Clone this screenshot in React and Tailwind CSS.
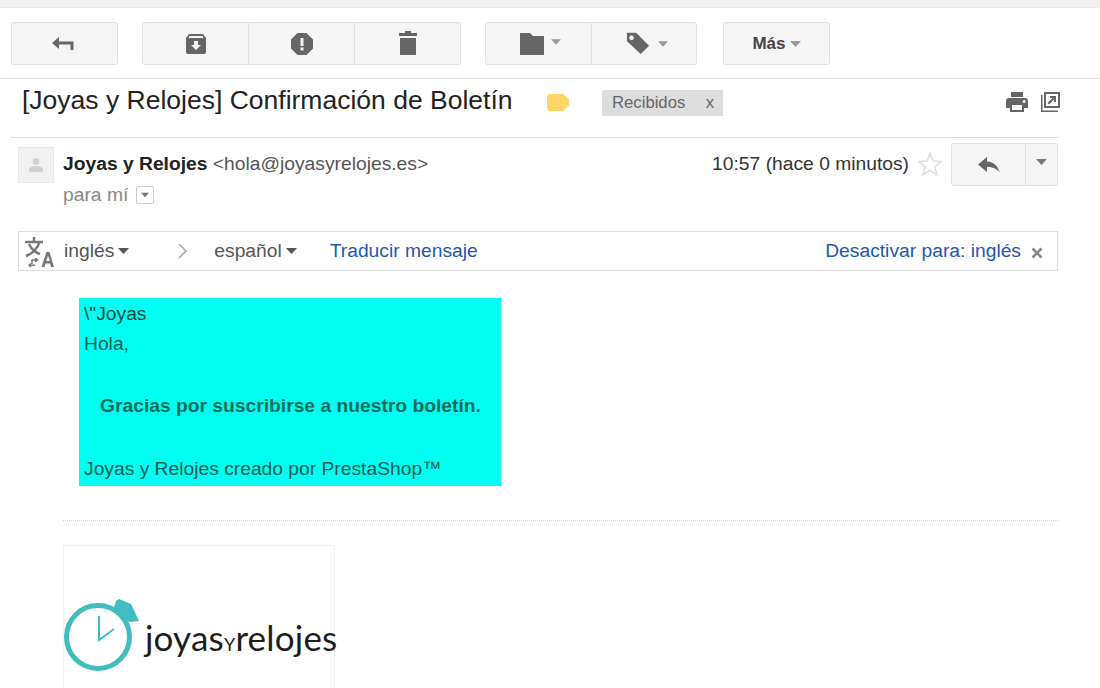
import React from 'react'

const Caret = ({ className = '' }) => (
  <svg width="11" height="6" viewBox="0 0 11 6" className={className}>
    <path d="M0 0h11L5.500 6z" fill="currentColor" />
  </svg>
)

const ToolButton = ({ className = '', children }) => (
  <div className={`h-full flex items-center justify-center text-[#666] ${className}`}>{children}</div>
)

function Toolbar() {
  const box = 'h-[43px] flex rounded-[3px] border border-[#e0e0e0] bg-[#f5f5f5]'
  return (
    <div className="h-[71px] pl-[11px] pt-[14px] border-b border-[#e5e5e5] flex">
      <div className={`${box} w-[107px]`}>
        <ToolButton className="w-full pr-[6px]">
          <svg width="24" height="16" viewBox="0 0 24 16" fill="none">
            <path d="M9 1L2 7l7 6V9.500V4.500z" fill="currentColor" />
            <path d="M8 7h14v7" stroke="currentColor" strokeWidth="3" fill="none" />
          </svg>
        </ToolButton>
      </div>
      <div className={`${box} w-[319px] ml-[24px] divide-x divide-[#e0e0e0]`}>
        <ToolButton className="w-[106px]">
          <svg width="22" height="20" viewBox="0 0 22 20">
            <path fillRule="evenodd" fill="currentColor" d="M4 0h14l3 4v14a2 2 0 0 1-2 2H3a2 2 0 0 1-2-2V4zM4.500 2L3.500 4h15l-1-2zM9 7v4H6l5 5 5-5h-3V7z" />
          </svg>
        </ToolButton>
        <ToolButton className="w-[106px]">
          <svg width="22" height="22" viewBox="0 0 22 22">
            <path fillRule="evenodd" fill="currentColor" d="M6.500 0h9L22 6.500v9L15.500 22h-9L0 15.500v-9zM9.500 5v8h3V5zM9.500 14.500v3h3v-3z" />
          </svg>
        </ToolButton>
        <ToolButton className="flex-1">
          <svg width="20" height="24" viewBox="0 0 20 24" className="-mt-[2px]">
            <path fill="currentColor" d="M7 0h6v2h6v3H1V2h6zM2 7h16v17H2z" />
          </svg>
        </ToolButton>
      </div>
      <div className={`${box} w-[212px] ml-[24px] divide-x divide-[#e0e0e0]`}>
        <ToolButton className="w-[106px] gap-[6px] pl-[2px]">
          <svg width="26" height="22" viewBox="0 0 26 22">
            <path fill="currentColor" d="M1 0h10l3 3h11v19H1z" />
          </svg>
          <Caret className="text-[#999] w-[10px] -mt-[3px]" />
        </ToolButton>
        <ToolButton className="flex-1 gap-[8px] pl-[6px]">
          <svg width="24" height="24" viewBox="0 0 26 26" className="-mt-[2px]">
            <path fillRule="evenodd" fill="currentColor" d="M1 2h10l14 14-9 9L1 11zM6 5a2.500 2.500 0 1 0 .01 0z" />
          </svg>
          <Caret className="text-[#999] w-[10px]" />
        </ToolButton>
      </div>
      <div className={`${box} w-[107px] ml-[26px]`}>
        <ToolButton className="w-full gap-[4px]">
          <span className="text-[17px] font-bold text-[#444]">Más</span>
          <Caret className="text-[#999]" />
        </ToolButton>
      </div>
    </div>
  )
}

function SubjectRow() {
  return (
    <div className="h-[59px] ml-[11px] mr-[42px] border-b border-[#e0e0e0] flex items-start">
      <h1 className="ml-[11px] mt-[3px] text-[26.500px] leading-[36px] text-[#222] whitespace-nowrap w-[514px]">
        [Joyas y Relojes] Confirmación de Boletín
      </h1>
      <svg width="22" height="17" viewBox="0 0 22 17" className="mt-[15px] ml-[11px]">
        <path fill="#fdd663" d="M3 0h13l6 5v7l-6 5H3a3 3 0 0 1-3-3V3a3 3 0 0 1 3-3z" />
      </svg>
      <div className="ml-[33px] mt-[11px] w-[121px] h-[26px] bg-[#dddddd] flex items-center justify-between pl-[10px] pr-[9px] text-[16.700px] text-[#666]">
        <span>Recibidos</span>
        <span>x</span>
      </div>
      <div className="ml-auto mt-[13px] flex items-center gap-[13px] text-[#666]">
        <svg width="22" height="20" viewBox="0 0 22 20">
          <path fillRule="evenodd" fill="currentColor" d="M5 0h12v5H5zM3 6h16a3 3 0 0 1 3 3v7h-4v4H4v-4H0V9a3 3 0 0 1 3-3zM6 13v5h10v-5zM18 8a1.500 1.500 0 1 0 .01 0z" />
        </svg>
        <svg width="19" height="20" viewBox="0 0 19 20" className="-mr-[2px]">
          <path fillRule="evenodd" fill="currentColor" d="M3 0h16v16H3zM5 2v12h12V2zM0 3h1.500v15.500H17V20H0z" />
          <path fill="currentColor" d="M9 4h6v6h-2V7.500l-5 5L6.500 11l5-5H9z" />
        </svg>
      </div>
    </div>
  )
}

function SenderRow() {
  return (
    <div className="h-[93px] ml-[18px] mr-[42px] flex items-start">
      <div className="mt-[9px] w-[36px] h-[36px] bg-[#f1f1f1] border border-[#e6e6e6] flex items-center justify-center">
        <svg width="14" height="14" viewBox="0 0 14 14">
          <circle cx="7" cy="3.500" r="3.200" fill="#d0d0d0" />
          <path d="M0 14v-2.500C0 9.500 3 8 7 8s7 1.500 7 3.500V14z" fill="#d0d0d0" />
        </svg>
      </div>
      <div className="ml-[9px] mt-[13px]">
        <div className="text-[19.250px] leading-[26px] text-[#555] whitespace-nowrap">
          <span className="font-bold text-[#222]">Joyas y Relojes</span> &lt;hola@joyasyrelojes.es&gt;
        </div>
        <div className="mt-[5px] flex items-center gap-[8px] text-[19.250px] leading-[26px] text-[#888]">
          <span>para mí</span>
          <span className="w-[18px] h-[18px] border border-[#ccc] rounded-[2px] flex items-center justify-center text-[#777]">
            <Caret className="w-[8px]" />
          </span>
        </div>
      </div>
      <div className="ml-auto flex items-start">
        <span className="mt-[13px] text-[19.250px] leading-[26px] text-[#333] whitespace-nowrap">10:57 (hace 0 minutos)</span>
        <svg width="24" height="24" viewBox="0 0 24 24" className="mt-[14px] ml-[9px]">
          <path d="M12 1.500l3 7.500 8 .6-6.100 5.200 1.900 7.800L12 18.400l-6.800 4.200 1.900-7.800L1 9.600 9 9z" fill="none" stroke="#dedede" strokeWidth="1.500" />
        </svg>
        <div className="mt-[5px] ml-[9px] w-[107px] h-[43px] flex rounded-[3px] border border-[#e0e0e0] bg-[#f5f5f5] divide-x divide-[#e0e0e0] text-[#666]">
          <div className="w-[74px] flex items-center justify-center">
            <svg width="22" height="18" viewBox="0 0 22 18">
              <path fill="currentColor" d="M9 1v4.500c7 .5 11 4.500 12.500 11-3-4-6.500-5.500-12.500-5.500V16L0 8.500z" />
            </svg>
          </div>
          <div className="flex-1 flex items-center justify-center pb-[5px]">
            <Caret className="text-[#777]" />
          </div>
        </div>
      </div>
    </div>
  )
}

function TranslateBar() {
  return (
    <div className="h-[40px] ml-[18px] mr-[42px] border border-[#dddddd] flex items-center text-[19.250px] whitespace-nowrap">
      <svg width="30" height="34" viewBox="0 0 30 34" className="ml-[5px] mt-[2px] text-[#777]">
        <path fill="none" stroke="currentColor" strokeWidth="2.400" d="M1 7h18M10 2v5M15.500 7C14 13 8 19 2 21M5 9c2 5 7 9 11 10" />
        <path fill="currentColor" d="M22.500 17h3L30 32h-3l-1-3.500h-4.500L20.500 32h-3zM24 20.500l-1.700 5.500h3.400z" />
        <path fill="none" stroke="currentColor" strokeWidth="1.400" d="M8 29v-4h5M11 23l2.500 2-2.500 2M7 32l-2-1.800L7 28.500M5.500 30.200H11" />
      </svg>
      <span className="ml-[10px] text-[#555]">inglés</span>
      <Caret className="ml-[4px] text-[#555]" />
      <svg width="10" height="16" viewBox="0 0 10 16" className="ml-[49px] text-[#aaa]">
        <path d="M1 1l7 7-7 7" fill="none" stroke="currentColor" strokeWidth="1.700" />
      </svg>
      <span className="ml-[26px] text-[#555]">español</span>
      <Caret className="ml-[4px] text-[#555]" />
      <a className="ml-[33px] text-[#1f56b0]">Traducir mensaje</a>
      <a className="ml-auto text-[#1f56b0]">Desactivar para: inglés</a>
      <svg width="12" height="12" viewBox="0 0 12 12" className="ml-[10px] mr-[14px] mt-[3px]">
        <path d="M1.500 1.500l9 9M10.500 1.500l-9 9" stroke="#888" strokeWidth="2.600" />
      </svg>
    </div>
  )
}

function MessageBody() {
  return (
    <div className="mt-[27px] ml-[79px] w-[422px] h-[188px] bg-[#00fff0] pl-[5px] pt-[1px] text-[19.250px] text-[#0c5f55] whitespace-nowrap">
      <p className="leading-[30px] text-[#164a44]">\"Joyas</p>
      <p className="leading-[30px]">Hola,</p>
      <p className="mt-[32px] leading-[30px] pl-[16px] font-bold text-[#0a6d5d]">Gracias por suscribirse a nuestro boletín.</p>
      <p className="mt-[33px] leading-[30px]">Joyas y Relojes creado por PrestaShop™</p>
    </div>
  )
}

function Logo() {
  return (
    <div className="mt-[24px] ml-[63px] w-[272px] h-[143px] border border-b-0 border-[#f0f0f0] flex items-start">
      <svg width="76" height="72" viewBox="0 0 76 72" className="mt-[53px] shrink-0 -ml-[1px]">
        <circle cx="35" cy="38" r="31.500" fill="none" stroke="#41bcbf" strokeWidth="5" />
        <path d="M53 2l3-2 12 5 8 17-10 1-15-15z" fill="#41bcbf" />
        <path d="M36 17v24l15-11" fill="none" stroke="#41bcbf" strokeWidth="2" />
      </svg>
      <div className="mt-[71px] ml-[6px] text-[35px] leading-[40px] tracking-[0.2px] font-['Lato',sans-serif] text-[#1d1d1d] whitespace-nowrap">
        joyas<span className="text-[18px]">Y</span>relojes
      </div>
    </div>
  )
}

export default function App() {
  return (
    <div className="w-[1100px] h-[688px] overflow-hidden bg-white font-['Liberation_Sans',Arial,sans-serif]">
      <div className="h-[8px] bg-[#f1f1f1] border-b border-[#e8e8e8]" />
      <Toolbar />
      <SubjectRow />
      <SenderRow />
      <TranslateBar />
      <MessageBody />
      <div className="mt-[34px] ml-[63px] mr-[42px] border-t border-dotted border-[#cfcfcf]" />
      <Logo />
    </div>
  )
}
